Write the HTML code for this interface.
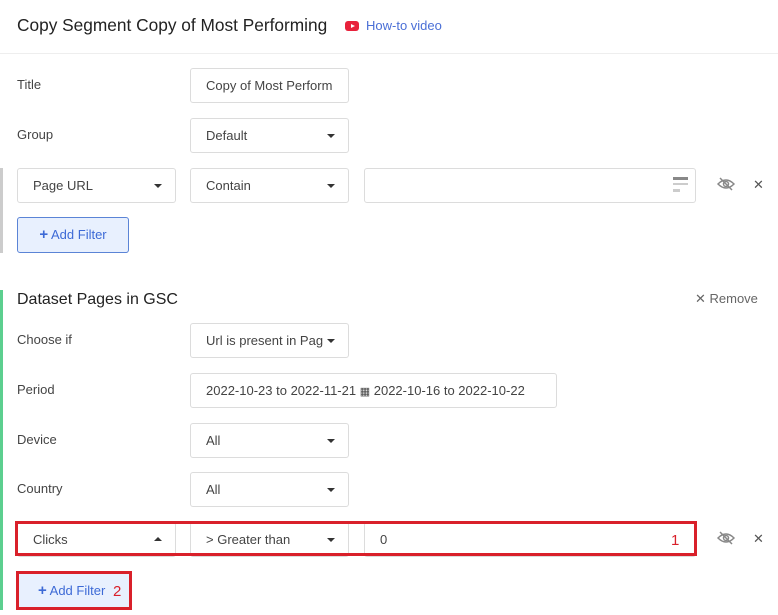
<!DOCTYPE html><html><head><style>
body{margin:0;width:778px;height:615px;background:#fff;font-family:"Liberation Sans",sans-serif;color:#333;position:relative;overflow:hidden}
.a{position:absolute}
.lbl{position:absolute;left:17px;font-size:13px;color:#444}
.box{position:absolute;border:1px solid #dcdcdc;border-radius:3px;background:#fff;box-sizing:border-box;font-size:13px;color:#444;padding-left:15px;line-height:33px;height:35px;white-space:nowrap;overflow:hidden}
.car{position:absolute;right:13px;top:15px;width:0;height:0;border-left:4px solid transparent;border-right:4px solid transparent;border-top:4px solid #333}
.up{border-top:none;border-bottom:4px solid #333;top:14px}
.btn{position:absolute;background:#e8f0fe;color:#3d6ad6;font-size:13px;box-sizing:border-box}
.x{position:absolute;font-size:13px;color:#555}
</style></head><body>
<div class="a" style="left:17px;top:15px;font-size:17.3px;color:#222">Copy Segment Copy of Most Performing</div>
<div class="a" style="left:345px;top:21px;width:14px;height:10px;background:#e8213b;border-radius:3px"></div>
<div class="a" style="left:351px;top:23.5px;width:0;height:0;border-top:2.5px solid transparent;border-bottom:2.5px solid transparent;border-left:4px solid #fff"></div>
<div class="a" style="left:366px;top:18px;font-size:13px;color:#4a6fd6">How-to video</div>
<div class="a" style="left:0;top:53px;width:778px;height:1px;background:#eee"></div>

<div class="lbl" style="top:77px">Title</div>
<div class="box" style="left:190px;top:68px;width:159px">Copy of Most Perform</div>
<div class="lbl" style="top:127px">Group</div>
<div class="box" style="left:190px;top:118px;width:159px">Default<div class="car"></div></div>

<div class="a" style="left:0;top:168px;width:3px;height:85px;background:#ccc"></div>
<div class="box" style="left:17px;top:168px;width:159px">Page URL<div class="car"></div></div>
<div class="box" style="left:190px;top:168px;width:159px">Contain<div class="car"></div></div>
<div class="box" style="left:364px;top:168px;width:332px"></div>
<div class="a" style="left:673px;top:177px;width:15px;height:3px;background:#888"></div>
<div class="a" style="left:673px;top:183px;width:15px;height:2px;background:#ccc"></div>
<div class="a" style="left:673px;top:189px;width:7px;height:3px;background:#ccc"></div>
<svg class="a" style="left:717px;top:176px" width="18" height="16" viewBox="0 0 18 16"><path d="M1 8Q9 0 17 8Q9 16 1 8Z" fill="none" stroke="#888" stroke-width="1.5"/><circle cx="9" cy="8" r="2.5" fill="none" stroke="#888" stroke-width="1.5"/><path d="M3 2L15 14" stroke="#888" stroke-width="1.5"/></svg>
<div class="x" style="left:753px;top:177px">✕</div>
<div class="btn" style="left:17px;top:217px;width:112px;height:36px;border:1px solid #5b84d6;border-radius:3px;line-height:33px;text-align:center"><b style="font-size:15px">+</b> Add Filter</div>

<div class="a" style="left:0;top:290px;width:3px;height:320px;background:#5ccf8f"></div>
<div class="a" style="left:17px;top:291px;font-size:16px;color:#222">Dataset Pages in GSC</div>
<div class="a" style="left:695px;top:291px;font-size:13px;color:#666">✕ Remove</div>
<div class="lbl" style="top:332px">Choose if</div>
<div class="box" style="left:190px;top:323px;width:159px">Url is present in Pag<div class="car"></div></div>
<div class="lbl" style="top:382px">Period</div>
<div class="box" style="left:190px;top:373px;width:367px">2022-10-23 to 2022-11-21 <span style="font-size:11px">▦</span> 2022-10-16 to 2022-10-22</div>
<div class="lbl" style="top:432px">Device</div>
<div class="box" style="left:190px;top:423px;width:159px">All<div class="car"></div></div>
<div class="lbl" style="top:481px">Country</div>
<div class="box" style="left:190px;top:472px;width:159px">All<div class="car"></div></div>

<div class="box" style="left:17px;top:522px;width:159px">Clicks<div class="car up"></div></div>
<div class="box" style="left:190px;top:522px;width:159px">&gt; Greater than<div class="car"></div></div>
<div class="box" style="left:364px;top:522px;width:332px">0</div>
<div class="a" style="left:15px;top:521px;width:682px;height:35px;border:3px solid #d9202a;box-sizing:border-box"></div>
<div class="a" style="left:671px;top:532px;font-size:15px;color:#d9202a">1</div>
<svg class="a" style="left:717px;top:530px" width="18" height="16" viewBox="0 0 18 16"><path d="M1 8Q9 0 17 8Q9 16 1 8Z" fill="none" stroke="#888" stroke-width="1.5"/><circle cx="9" cy="8" r="2.5" fill="none" stroke="#888" stroke-width="1.5"/><path d="M3 2L15 14" stroke="#888" stroke-width="1.5"/></svg>
<div class="x" style="left:753px;top:531px">✕</div>
<div class="btn" style="left:16px;top:571px;width:116px;height:39px;border:3px solid #d9202a;line-height:33px;padding-left:19px"><b style="font-size:15px">+</b> Add Filter</div>
<div class="a" style="left:113px;top:583px;font-size:15px;color:#d9202a">2</div>
</body></html>
